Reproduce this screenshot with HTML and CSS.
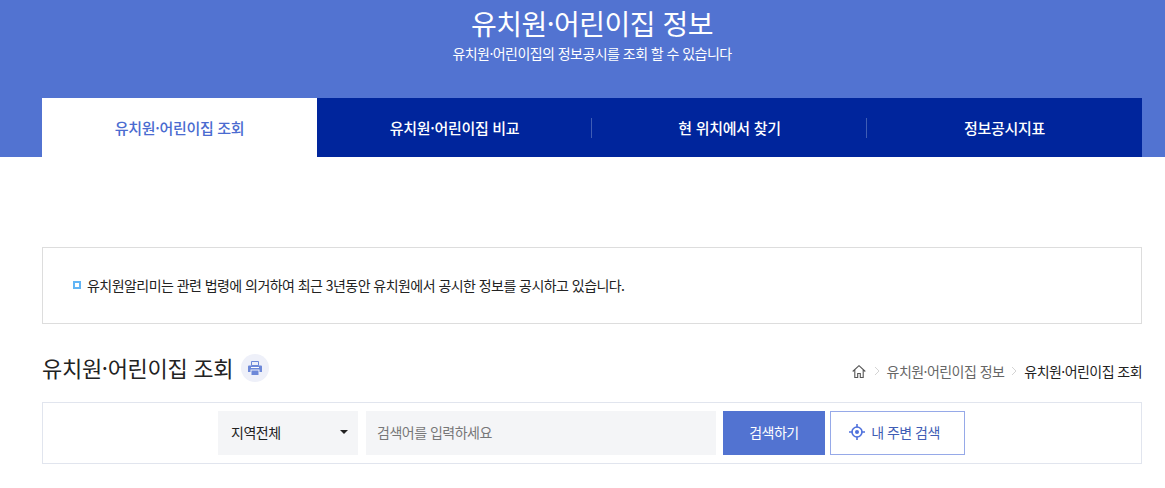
FILE: index.html
```html
<!DOCTYPE html>
<html lang="ko">
<head>
<meta charset="utf-8">
<title>유치원·어린이집 조회</title>
<link rel="stylesheet" href="styles.css">
</head>
<body>
<header class="hero">
  <div class="hero-inner">
    <h1 class="hero-title">유치원·어린이집 정보</h1>
    <p class="hero-sub">유치원·어린이집의 정보공시를 조회 할 수 있습니다</p>
    <nav class="tabs">
      <a class="tab tab-active">유치원·어린이집 조회</a>
      <a class="tab">유치원·어린이집 비교</a>
      <a class="tab tab-sep">현 위치에서 찾기</a>
      <a class="tab tab-sep">정보공시지표</a>
    </nav>
  </div>
</header>
<main class="wrap">
  <div class="notice"><span class="notice-mark"></span>유치원알리미는 관련 법령에 의거하여 최근 3년동안 유치원에서 공시한 정보를 공시하고 있습니다.</div>
  <div class="title-row">
    <div class="title-left">
      <h2 class="page-title">유치원·어린이집 조회</h2>
      <span class="print">
        <svg width="14" height="14" viewBox="0 0 14 14"><path fill="none" stroke="#6d88d8" d="M3.500.5h7v4h-7z"/><path fill="#6d88d8" d="M1 4.500h12a1 1 0 0 1 1 1V11h-2.500V8.500h-9V11H0V5.500a1 1 0 0 1 1-1zM3.500 9.500h7V14h-7z"/><path fill="#fff" d="M3 6h8v1H3z"/></svg>
      </span>
    </div>
    <div class="crumbs">
      <svg class="home" width="14" height="13" viewBox="0 0 14 13"><path fill="none" stroke="#555" stroke-width="1.100" d="M.7 6.500 7 .7l6.300 5.800M2.800 5v7.500h2.900V8.500h2.600v4h2.900V5"/></svg>
      <svg class="chev" width="6" height="10" viewBox="0 0 6 10"><path fill="none" stroke="#d4d4d4" d="m1 1 4 4-4 4"/></svg>
      <span class="crumb">유치원·어린이집 정보</span>
      <svg class="chev" width="6" height="10" viewBox="0 0 6 10"><path fill="none" stroke="#d4d4d4" d="m1 1 4 4-4 4"/></svg>
      <span class="crumb crumb-now">유치원·어린이집 조회</span>
    </div>
  </div>
  <div class="search">
    <div class="select">지역전체<span class="caret"></span></div>
    <div class="input">검색어를 입력하세요</div>
    <button class="btn-search">검색하기</button>
    <button class="btn-near">
      <svg width="16" height="16" viewBox="0 0 16 16"><circle cx="8" cy="8" r="5" fill="none" stroke="#4f71dc" stroke-width="1.600"/><circle cx="8" cy="8" r="2" fill="#4f71dc"/><path stroke="#4f71dc" stroke-width="1.600" d="M8 0v3.500M8 12.500V16M0 8h3.500M12.500 8H16"/></svg>
      내 주변 검색
    </button>
  </div>
</main>
</body>
</html>
```

FILE: styles.css
```css
* { box-sizing: border-box; }
html, body { margin: 0; padding: 0; }
body {
  background: #fff;
  color: #222;
  font-family: "Noto Sans CJK KR", "Noto Sans", sans-serif;
  height: 488px;
  overflow: hidden;
}
h1, h2, p { margin: 0; font-weight: 400; }

.hero {
  background: #5273d1;
  height: 157px;
  color: #fff;
}
.hero-inner {
  width: 1100px;
  height: 100%;
  margin-left: 42px;
  padding-top: 3px;
  display: flex;
  flex-direction: column;
  align-items: center;
}
.hero-title { font-size: 28px; line-height: 40px; letter-spacing: -0.5px; }
.hero-sub { font-size: 14px; line-height: 20px; letter-spacing: -0.55px; }

.tabs {
  margin-top: auto;
  width: 100%;
  height: 59px;
  display: grid;
  grid-template-columns: repeat(4, 1fr);
  background: #00259c;
}
.tab {
  display: flex;
  align-items: center;
  justify-content: center;
  color: #fff;
  font-size: 15px;
  font-weight: 500;
  letter-spacing: -0.3px;
  position: relative;
}
.tab-active { background: #fff; color: #4a6bd0; }
.tab-sep::before {
  content: "";
  position: absolute;
  left: -1px;
  top: 20px;
  width: 1px;
  height: 20px;
  background: #3f5db5;
}

.wrap { width: 1100px; margin: 90px 0 0 42px; }

.notice {
  height: 77px;
  border: 1px solid #ddd;
  padding: 0 0 2px 30px;
  display: flex;
  align-items: center;
  font-size: 14px;
  letter-spacing: -0.55px;
}
.notice-mark {
  width: 8px;
  height: 8px;
  border: 2px solid #62b5f5;
  margin-right: 6px;
}

.title-row {
  display: flex;
  align-items: center;
  justify-content: space-between;
  height: 78px;
  padding-top: 10px;
}
.title-left { display: flex; align-items: center; }
.page-title { font-size: 22px; letter-spacing: -0.3px; color: #222; margin-top: -2px; }
.print {
  width: 28px;
  height: 28px;
  border-radius: 50%;
  background: #eef0f9;
  margin-left: 8px;
  display: flex;
  align-items: center;
  justify-content: center;
}
.crumbs {
  display: flex;
  align-items: center;
  font-size: 14px;
  letter-spacing: -0.55px;
  color: #666;
  margin-top: 6px;
}
.home { margin-right: 8px; }
.chev { margin-right: 7px; }
.crumb { margin-right: 7px; }
.crumb-now { color: #222; margin-right: 0; }

.search {
  height: 62px;
  border: 1px solid #e1e5ee;
  display: flex;
  align-items: center;
  justify-content: center;
  padding-right: 1px;
  font-size: 14px;
  letter-spacing: -0.5px;
}
.select {
  width: 140px;
  height: 44px;
  background: #f4f5f7;
  display: flex;
  align-items: center;
  justify-content: space-between;
  padding: 0 10px 2px 13px;
  color: #222;
}
.caret {
  width: 0;
  height: 0;
  border: 4px solid transparent;
  border-top: 4px solid #222;
  border-bottom: 0;
}
.input {
  width: 350px;
  height: 44px;
  margin-left: 8px;
  background: #f4f5f7;
  display: flex;
  align-items: center;
  padding: 0 0 2px 11px;
  color: #777;
}
.btn-search, .btn-near {
  height: 44px;
  font: inherit;
  letter-spacing: inherit;
  cursor: pointer;
}
.btn-search {
  width: 102px;
  margin-left: 7px;
  background: #5273d1;
  border: 0;
  color: #fff;
  padding: 0 0 2px;
}
.btn-near {
  width: 135px;
  margin-left: 5px;
  background: #fff;
  border: 1px solid #96a9e8;
  color: #3f5db5;
  display: flex;
  align-items: center;
  justify-content: center;
  gap: 6px;
  padding: 0 6px 2px 0;
}
```
